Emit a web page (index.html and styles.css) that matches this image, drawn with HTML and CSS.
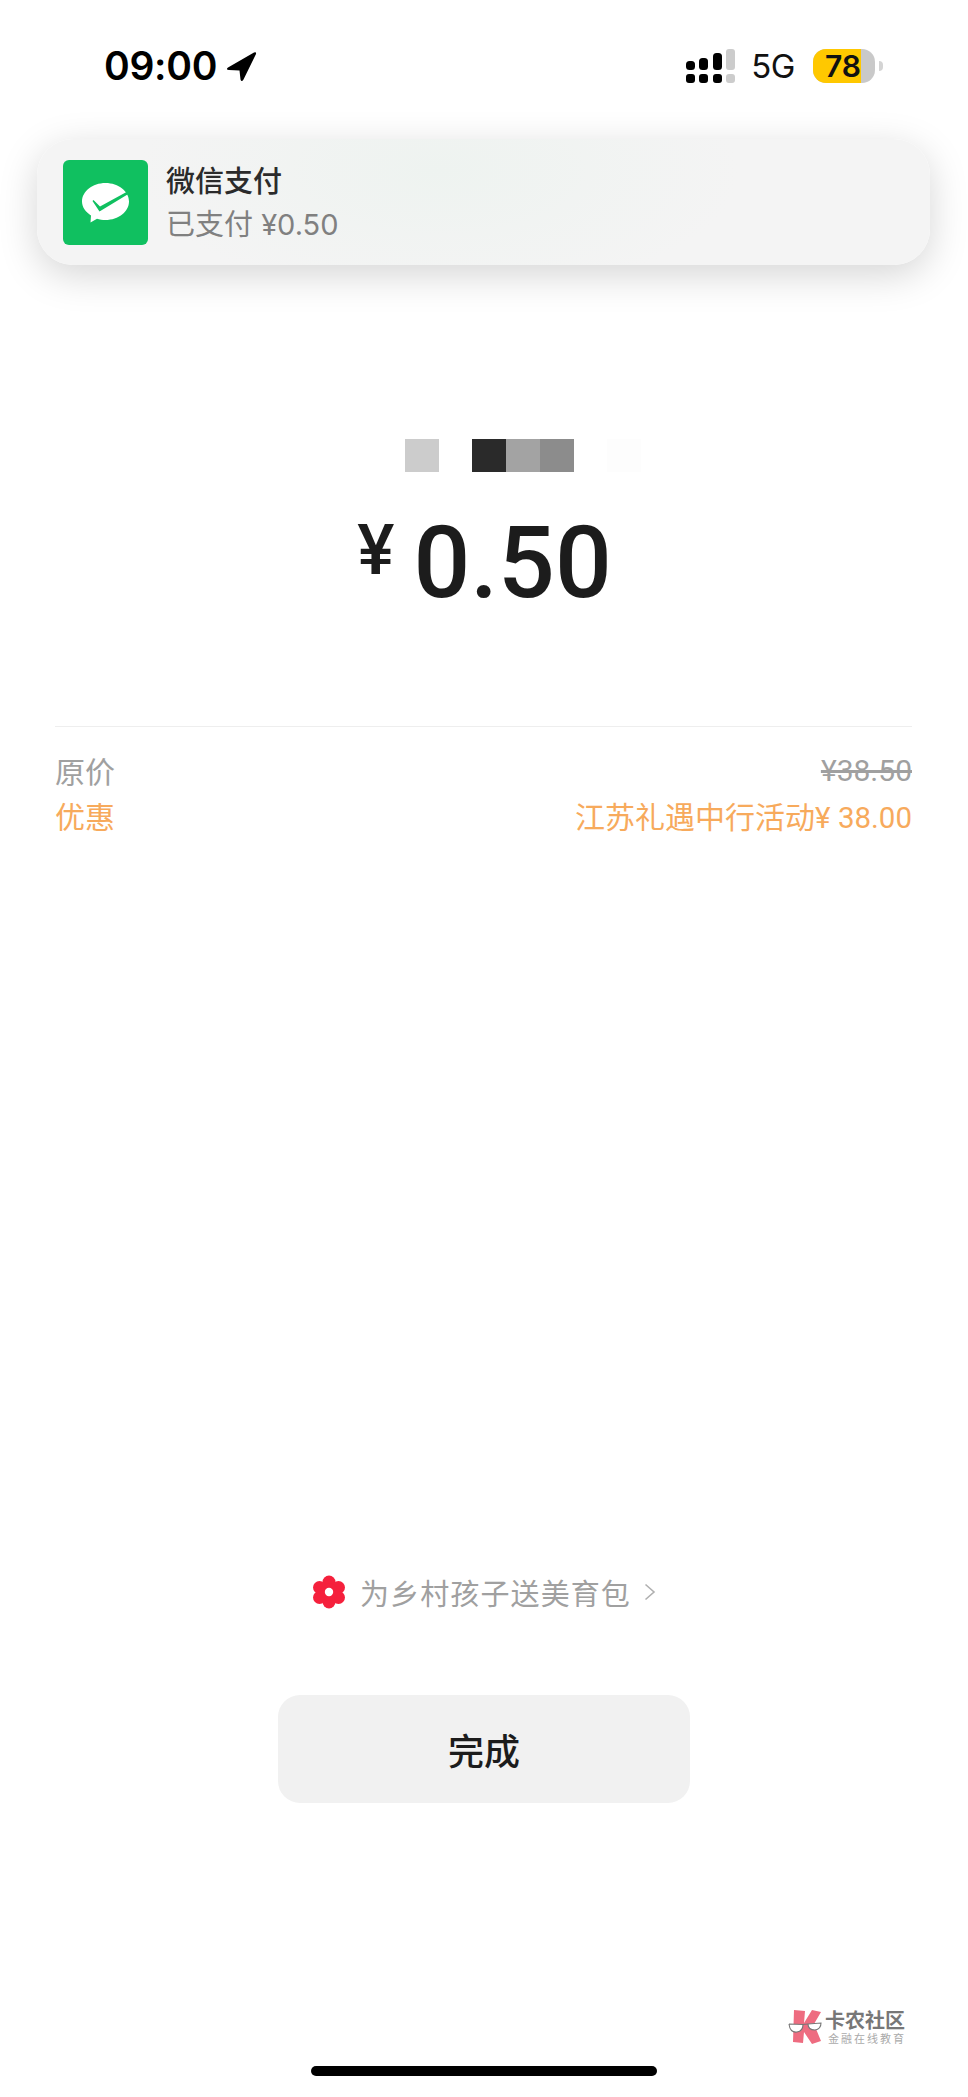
FILE: index.html
```html
<!DOCTYPE html>
<html lang="zh-CN">
<head>
  <meta charset="UTF-8" />
  <title>微信支付</title>
  <link rel="stylesheet" href="styles.css">
</head>
<body>
  <div class="phone">
    <div class="status-bar">
      <div class="status-left">
        <span class="time">09:00</span>
        <svg class="location" viewBox="0 0 31 31" width="31" height="31">
          <path d="M2 16.500 L28 1.500 Q30.500 .5 30 3 L17.500 28.500 Q15.500 31.500 14.500 28.500 L13.500 19.500 L3 19 Q-.5 18.500 2 16.500Z" fill="#000"/>
        </svg>
      </div>
      <div class="status-right">
        <svg class="signal" viewBox="0 0 49 34" width="49" height="34">
          <rect x="0" y="25" width="9" height="9" rx="3" fill="#000"/>
          <rect x="13" y="25" width="9" height="9" rx="3" fill="#000"/>
          <rect x="27" y="25" width="9" height="9" rx="3" fill="#000"/>
          <rect x="40" y="25" width="9" height="9" rx="3" fill="#ccc"/>
          <rect x="0" y="12" width="9" height="9" rx="3.500" fill="#000"/>
          <rect x="13" y="9" width="9" height="12" rx="3.500" fill="#000"/>
          <rect x="27" y="4" width="9" height="17" rx="3.500" fill="#000"/>
          <rect x="40" y="0" width="9" height="21" rx="3" fill="#ccc"/>
        </svg>
        <span class="network">5G</span>
        <div class="battery"><span class="battery-level">78</span></div>
        <span class="battery-tip"></span>
      </div>
    </div>

    <div class="notice">
      <svg class="notice-icon" viewBox="0 0 85 85" width="85" height="85">
        <rect width="85" height="85" rx="6" fill="#10c060"/>
        <path d="M42.500 23 C55.500 23 66 31.500 66 41.500 C66 51.500 55.500 60 42.500 60 C39.500 60 36.500 59.600 34 58.700 L27.500 62.500 L28 55.500 C22.500 52 19 47 19 41.500 C19 31.500 29.500 23 42.500 23Z" fill="#fff"/>
        <path d="M30.500 40 L37 46.500 L63.500 32 L64.500 34.500 L36.500 51.500 L29.500 41 Z" fill="#10c060"/>
      </svg>
      <div class="notice-text">
        <div class="notice-title">微信支付</div>
        <div class="notice-sub">已支付 ¥0.50</div>
      </div>
    </div>

    <div class="payee">
      <span class="px px-a"></span>
      <span class="px px-gap"></span>
      <span class="px px-b"></span>
      <span class="px px-c"></span>
      <span class="px px-d"></span>
      <span class="px px-gap"></span>
      <span class="px px-e"></span>
    </div>

    <div class="amount">
      <span class="amount-yen">¥</span>
      <span class="amount-num">0.50</span>
    </div>

    <div class="details">
      <div class="detail-row">
        <span>原价</span>
        <span class="old-price">¥38.50</span>
      </div>
      <div class="detail-row discount">
        <span>优惠</span>
        <span>江苏礼遇中行活动<span class="discount-num">¥ 38.00</span></span>
      </div>
    </div>

    <div class="charity">
      <svg class="flower" viewBox="0 0 34 34" width="34" height="34">
        <g fill="#f5203c">
          <circle cx="17" cy="7" r="6.500"/>
          <circle cx="26.500" cy="12.500" r="6.500"/>
          <circle cx="26.500" cy="22.500" r="6.500"/>
          <circle cx="17" cy="27" r="6.500"/>
          <circle cx="7.500" cy="22.500" r="6.500"/>
          <circle cx="7.500" cy="12.500" r="6.500"/>
          <circle cx="17" cy="17" r="9"/>
        </g>
        <circle cx="17" cy="17" r="4.200" fill="#fff"/>
      </svg>
      <span class="charity-text">为乡村孩子送美育包</span>
      <svg class="chevron" viewBox="0 0 12 18" width="12" height="18">
        <path d="M1.500 1.500 L10 9 L1.500 16.500" fill="none" stroke="#b0b0b0" stroke-width="1.600"/>
      </svg>
    </div>

    <button class="done">完成</button>

    <div class="watermark">
      <svg class="wm-logo" viewBox="0 0 36 36" width="36" height="36">
        <path d="M6 1 L17 2 L16 14 L24 1 L33 3 L26 15 L33 32 L24 35 L16 23 L15 34 L5 33 Z" fill="#ee6c80"/>
        <path d="M1 15 Q2 24 9 23 Q15 22 15 15.500 L1 15 M20 15 Q20 21 27 21 Q33 20 33 14 L20 15" fill="#fff" stroke="#777" stroke-width="1.100"/>
        <path d="M15 15.500 L20 15" stroke="#777" stroke-width="1.100"/>
      </svg>
      <div class="wm-text">
        <div class="wm-name">卡农社区</div>
        <div class="wm-sub">金融在线教育</div>
      </div>
    </div>

    <div class="home-bar"></div>
  </div>
</body>
</html>
```

FILE: styles.css
```css
* {
  box-sizing: border-box;
}

body {
  margin: 0;
  background: #fff;
  font-family: "Noto Sans CJK SC", "Noto Sans", sans-serif;
}

.phone {
  position: relative;
  width: 968px;
  height: 2097px;
  overflow: hidden;
  background: #fff;
}

.status-bar {
  display: flex;
  justify-content: space-between;
  align-items: center;
  height: 139px;
  padding: 0 85px 7px 104px;
}

.status-left,
.status-right {
  display: flex;
  align-items: center;
}

.time {
  font-family: Inter, sans-serif;
  font-size: 39px;
  line-height: 40px;
  font-weight: 600;
  letter-spacing: -0.3px;
  color: #000;
}

.location {
  margin-left: 9px;
}

.network {
  margin-left: 16px;
  font-family: Inter, sans-serif;
  font-size: 33px;
  line-height: 34px;
  letter-spacing: -0.5px;
  color: #111;
}

.battery {
  width: 62px;
  height: 34px;
  margin-left: 18px;
  border-radius: 13px;
  overflow: hidden;
  background: #c9c9c9;
}

.battery-level {
  display: block;
  width: 48px;
  height: 34px;
  padding-left: 12px;
  background: #ffc800;
  font-family: Inter, sans-serif;
  font-size: 30px;
  line-height: 34px;
  font-weight: 600;
  color: #111;
  white-space: nowrap;
}

.battery-tip {
  width: 4px;
  height: 10px;
  margin-left: 4px;
  border-radius: 0 5px 5px 0;
  background: #d4d4d4;
}

.notice {
  display: flex;
  align-items: center;
  height: 126px;
  margin: 0 38px 0 37px;
  padding-left: 26px;
  border-radius: 36px;
  background: radial-gradient(ellipse 300px 130px at 45% 25%, #eef3f0, #f4f4f4);
  box-shadow: 0 10px 38px rgba(0, 0, 0, 0.17);
}

.notice-text {
  margin-left: 18px;
}

.notice-title {
  font-size: 29px;
  line-height: 40px;
  font-weight: 500;
  color: #2b2b2b;
}

.notice-sub {
  margin-top: 6px;
  font-family: Inter, "Noto Sans CJK SC", sans-serif;
  font-size: 29px;
  line-height: 40px;
  color: #808080;
}

.payee {
  display: flex;
  justify-content: center;
  height: 34px;
  margin-top: 174px;
  padding-left: 77px;
}

.px {
  width: 34px;
  height: 33px;
}

.px-gap { width: 33px; }
.px-a { background: #ccc; }
.px-b { background: #2a2a2a; }
.px-c { background: #a3a3a3; }
.px-d { background: #8c8c8c; }
.px-e { background: #fdfdfd; }

.amount {
  display: flex;
  justify-content: center;
  align-items: flex-start;
  height: 113px;
  margin-top: 35px;
  padding-left: 1px;
  color: #1c1c1c;
}

.amount-yen {
  margin-top: 2px;
  font-family: Roboto, sans-serif;
  font-size: 70px;
  line-height: 80px;
  font-weight: 500;
}

.amount-num {
  margin-left: 19px;
  font-family: Roboto, sans-serif;
  font-size: 100px;
  line-height: 110px;
  font-weight: 500;
}

.details {
  margin: 105px 56px 0 55px;
  padding-top: 21px;
  border-top: 1px solid #eee;
}

.detail-row {
  display: flex;
  justify-content: space-between;
  height: 45px;
  font-size: 30px;
  line-height: 45px;
  color: #a0a0a0;
}

.old-price {
  font-family: Roboto, sans-serif;
  text-decoration: line-through;
}

.discount {
  color: #f7aa5c;
}

.discount-num {
  font-family: Roboto, sans-serif;
  font-size: 29.500px;
}

.charity {
  display: flex;
  justify-content: center;
  align-items: center;
  height: 34px;
  margin-top: 737px;
  color: #a0a0a0;
  font-size: 29px;
}

.charity-text {
  margin-left: 14px;
  letter-spacing: 1.100px;
}

.chevron {
  margin-left: 13px;
}

.done {
  display: block;
  width: 412px;
  height: 108px;
  margin: 86px 0 0 278px;
  border: none;
  border-radius: 22px;
  background: #f1f1f1;
  font-family: inherit;
  font-size: 36px;
  font-weight: 500;
  color: #1c1c1c;
}

.watermark {
  position: absolute;
  left: 788px;
  top: 2009px;
  display: flex;
  align-items: center;
}

.wm-text {
  margin-left: 1px;
}

.wm-name {
  font-size: 20px;
  line-height: 22px;
  font-weight: 700;
  color: #777;
}

.wm-sub {
  margin-left: 3px;
  font-size: 11px;
  line-height: 14px;
  letter-spacing: 2px;
  color: #aaa;
  white-space: nowrap;
}

.home-bar {
  position: absolute;
  left: 311px;
  top: 2066px;
  width: 346px;
  height: 10px;
  border-radius: 5px;
  background: #000;
}
```
